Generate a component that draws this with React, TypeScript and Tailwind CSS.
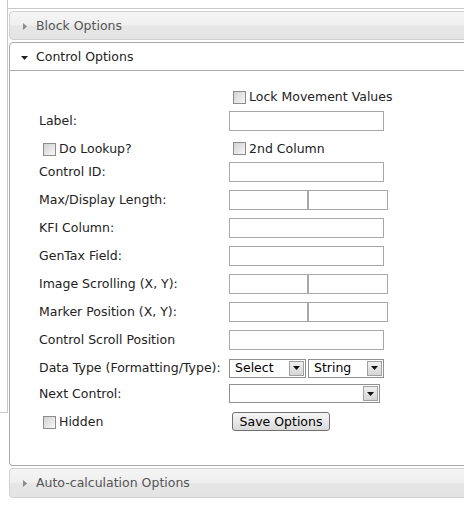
import React from 'react';

const Caret = ({ open = false }: { open?: boolean }) =>
  open ? (
    <svg width="7" height="4" viewBox="0 0 7 4" className="ml-[11px] mr-[8px] shrink-0">
      <path d="M0 0h7L3.5 4z" fill="#222" />
    </svg>
  ) : (
    <svg width="4" height="7" viewBox="0 0 4 7" className="ml-[13px] mr-[9px] shrink-0">
      <path d="M0 0l4 3.5L0 7z" fill="#8a8a8a" />
    </svg>
  );

const Header = ({ title, open = false }: { title: string; open?: boolean }) => (
  <div
    className={
      open
        ? 'mt-[2px] flex h-[29px] items-center rounded-tl-[4px] border border-[#aaaaaa] bg-white pt-[2px] text-[#222]'
        : 'mt-[2px] flex h-[29px] items-center rounded-l-[4px] border border-[#d0d0d0] bg-[linear-gradient(#f5f5f5_0%,#efefef_48%,#e6e6e6_52%,#e4e4e4_100%)] pt-[2px] text-[#555]'
    }
  >
    <Caret open={open} />
    <span>{title}</span>
  </div>
);

const CheckBox = () => (
  <span className="ml-[4px] mr-[3px] inline-block h-[13px] w-[13px] shrink-0 border border-[#8c8c8c] bg-gradient-to-br from-[#d2d2d2] to-[#f7f7f7]" />
);

const TextBox = ({ w = 'w-[155px]' }: { w?: string }) => (
  <input type="text" className={`${w} h-[20px] border border-[#a7a7a7] bg-white outline-none`} />
);

const DropArrow = () => (
  <span className="flex h-[15px] w-[15px] shrink-0 items-center justify-center border border-[#a0a0a0] bg-gradient-to-b from-[#f0f0f0] to-[#d6d6d6]">
    <svg width="7" height="4" viewBox="0 0 7 4">
      <path d="M0 0h7L3.5 4z" fill="#111" />
    </svg>
  </span>
);

const Select = ({ value, w }: { value: string; w: string }) => (
  <div className={`${w} flex h-[19px] items-center border border-[#8f8f8f] bg-white p-[1px]`}>
    <span className="grow pl-[4px] pt-[1px] leading-none text-black">{value}</span>
    <DropArrow />
  </div>
);

const Row = ({ h, label, children }: { h: string; label?: React.ReactNode; children?: React.ReactNode }) => (
  <div className={`flex items-center ${h}`}>
    <div className="flex w-[219px] shrink-0 items-center pl-[29px] pt-[1px]">{label}</div>
    <div className="flex items-center">{children}</div>
  </div>
);

const App: React.FC = () => {
  return (
    <div className="h-[506px] w-[464px] overflow-hidden bg-white font-['DejaVu_Sans',Verdana,sans-serif] text-[12.5px] text-[#222]">
      <div className="flex">
        <div className="w-[8px] shrink-0">
          <div className="h-[413px] border-r border-b border-[#c8c8c8]" />
        </div>
        <div className="w-[480px] shrink-0">
          <div className="h-[9px] border-b border-[#c8c8c8]" />
          <div className="ml-[1px]">
            <Header title="Block Options" />
            <Header title="Control Options" open />
            <div className="h-[395px] rounded-bl-[4px] border-x border-b border-[#aaaaaa] pt-[16px]">
              <Row h="h-[20px]">
                <CheckBox />
                <span className="pt-[1px]">Lock Movement Values</span>
              </Row>
              <Row h="h-[28px]" label="Label:">
                <TextBox />
              </Row>
              <Row
                h="h-[23px] pt-[4px]"
                label={
                  <span className="flex items-center">
                    <CheckBox />
                    <span>Do Lookup?</span>
                  </span>
                }
              >
                <CheckBox />
                <span className="pt-[1px]">2nd Column</span>
              </Row>
              <Row h="h-[28px]" label="Control ID:">
                <TextBox />
              </Row>
              <Row h="h-[28px]" label="Max/Display Length:">
                <TextBox w="w-[79px]" />
                <TextBox w="w-[80px]" />
              </Row>
              <Row h="h-[28px]" label="KFI Column:">
                <TextBox />
              </Row>
              <Row h="h-[28px]" label="GenTax Field:">
                <TextBox />
              </Row>
              <Row h="h-[28px]" label="Image Scrolling (X, Y):">
                <TextBox w="w-[79px]" />
                <TextBox w="w-[80px]" />
              </Row>
              <Row h="h-[28px]" label="Marker Position (X, Y):">
                <TextBox w="w-[79px]" />
                <TextBox w="w-[80px]" />
              </Row>
              <Row h="h-[28px]" label="Control Scroll Position">
                <TextBox />
              </Row>
              <Row h="h-[28px]" label="Data Type (Formatting/Type):">
                <Select value="Select" w="w-[77px]" />
                <div className="w-[2px]" />
                <Select value="String" w="w-[76px]" />
              </Row>
              <Row h="h-[23px]" label="Next Control:">
                <Select value="" w="w-[151px]" />
              </Row>
              <Row
                h="h-[33px]"
                label={
                  <span className="flex items-center">
                    <CheckBox />
                    <span>Hidden</span>
                  </span>
                }
              >
                <button className="ml-[3px] h-[19px] w-[98px] rounded-[3px] border border-[#707070] bg-gradient-to-b from-[#f6f6f6] to-[#dadada] pt-[1px] leading-none text-black">
                  Save Options
                </button>
              </Row>
            </div>
            <div className="mt-[2px] flex h-[30px] items-center rounded-l-[4px] border border-[#d0d0d0] bg-[linear-gradient(#f5f5f5_0%,#efefef_48%,#e6e6e6_52%,#e4e4e4_100%)] pt-[1px] text-[#555]">
              <Caret />
              <span>Auto-calculation Options</span>
            </div>
          </div>
        </div>
      </div>
    </div>
  );
};

export default App;
